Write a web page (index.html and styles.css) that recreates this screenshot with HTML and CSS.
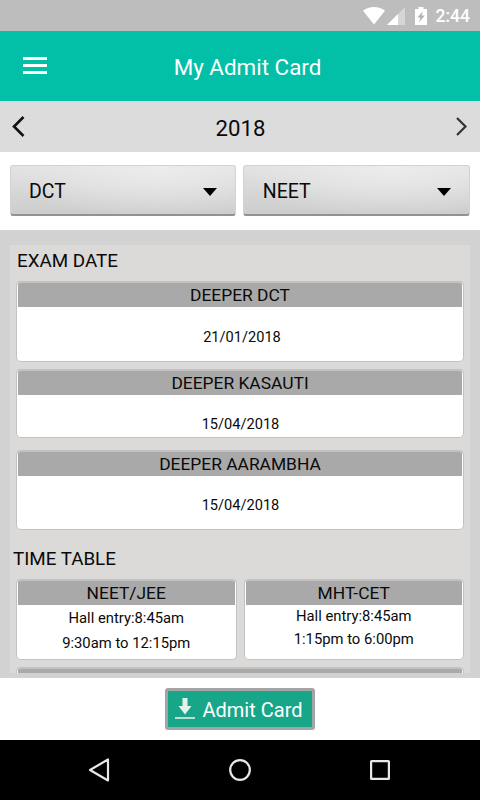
FILE: index.html
```html
<!DOCTYPE html>
<html lang="en">
<head>
  <meta charset="UTF-8" />
  <meta name="viewport" content="width=device-width, initial-scale=1" />
  <title>My Admit Card</title>
  <link rel="stylesheet" href="styles.css">
</head>
<body>

  <div class="status-bar">
    <svg class="wifi" width="22" height="18" viewBox="0 0 22 18"><path d="M0 3.8C6-1.2 16-1.2 22 3.8L11 17.5Z" fill="#fff"/></svg>
    <svg class="signal" width="18" height="18" viewBox="0 0 18 18"><path d="M0 18L18 0V18Z" fill="#d6d6d6"/><path d="M0 18L11 7V18Z" fill="#fff"/></svg>
    <svg class="battery" width="12" height="18" viewBox="0 0 12 18"><path d="M3.5 0h5v2H12v16H0V2h3.5Z" fill="#fff"/><path d="M8 4L2.500 10.500H5.500L4 15.500L9.700 8.500H6.500Z" fill="#b0b0b0"/></svg>
    <span class="clock">2:44</span>
  </div>

  <header class="toolbar">
    <button class="menu" aria-label="Menu">
      <svg width="24" height="17" viewBox="0 0 24 17"><path d="M0 0h24v3H0zM0 7h24v3H0zM0 14h24v3H0z" fill="#fff"/></svg>
    </button>
    <h1>My Admit Card</h1>
  </header>

  <div class="year-bar">
    <button class="prev" aria-label="Previous year">
      <svg width="13" height="21" viewBox="0 0 13 21"><path d="M11.500 1L2 10.500L11.500 20" fill="none" stroke="#111" stroke-width="2.600"/></svg>
    </button>
    <span class="year">2018</span>
    <button class="next" aria-label="Next year">
      <svg width="12" height="19" viewBox="0 0 12 19"><path d="M1 1L9.500 9.500L1 18" fill="none" stroke="#333" stroke-width="2.200"/></svg>
    </button>
  </div>

  <div class="filters">
    <button class="select">DCT <i class="caret"></i></button>
    <button class="select">NEET <i class="caret"></i></button>
  </div>

  <main class="content">
    <div class="panel">
      <h2 class="exam-title">Exam Date</h2>
      <div class="card dct">
        <h3>DEEPER DCT</h3>
        <p>21/01/2018</p>
      </div>
      <div class="card kasauti">
        <h3>DEEPER KASAUTI</h3>
        <p>15/04/2018</p>
      </div>
      <div class="card aarambha">
        <h3>DEEPER AARAMBHA</h3>
        <p>15/04/2018</p>
      </div>

      <h2 class="time-title">Time Table</h2>
      <div class="row">
        <div class="card neet">
          <h3>NEET/JEE</h3>
          <p>Hall entry:8:45am</p>
          <p>9:30am to 12:15pm</p>
        </div>
        <div class="card cet">
          <h3>MHT-CET</h3>
          <p>Hall entry:8:45am</p>
          <p>1:15pm to 6:00pm</p>
        </div>
      </div>
      <div class="card more">
        <h3></h3>
      </div>
    </div>
  </main>

  <footer class="actions">
    <button class="download">
      <svg width="22" height="22" viewBox="0 0 22 22"><path d="M8.500 0h5v8H17.500L11 16.500L4.500 8h4Z" fill="#e4f3ef"/><path d="M1 19h20v2H1z" fill="#b9e0d7"/></svg>
      <span>Admit Card</span>
    </button>
  </footer>

  <nav class="nav-bar">
    <svg width="22" height="24" viewBox="0 0 22 24"><path d="M20 1.500V22.500L2 12Z" fill="none" stroke="#e8e8e8" stroke-width="2.200" stroke-linejoin="round"/></svg>
    <svg width="22" height="22" viewBox="0 0 22 22"><circle cx="11" cy="11" r="9.800" fill="none" stroke="#e8e8e8" stroke-width="2.200"/></svg>
    <svg width="20" height="20" viewBox="0 0 20 20"><rect x="1.100" y="1.100" width="17.800" height="17.800" rx="0.500" fill="none" stroke="#e8e8e8" stroke-width="2.200"/></svg>
  </nav>

</body>
</html>
```
FILE: styles.css
```css
* {
  box-sizing: border-box;
}
body {
  margin: 0;
  width: 480px;
  height: 800px;
  display: flex;
  flex-direction: column;
  overflow: hidden;
  background: #fff;
  color: #0a0a0a;
  font-family: Roboto, "Liberation Sans", sans-serif;
}
h1, h2, h3, p {
  margin: 0;
  font-weight: 400;
}
button {
  border: none;
  background: none;
  padding: 0;
  color: inherit;
  font-family: inherit;
}
svg {
  display: block;
}

/* status bar */
.status-bar {
  height: 31px;
  background: #bdbdbd;
  display: flex;
  justify-content: flex-end;
  align-items: center;
  padding-right: 10px;
}
.signal {
  margin-left: 2px;
}
.battery {
  margin: 0 9px 0 10px;
}
.clock {
  color: #fff;
  font-size: 17.5px;
  font-weight: 500;
  line-height: 31px;
  padding-top: 1px;
}

/* toolbar */
.toolbar {
  height: 70px;
  background: #02c0a7;
  display: grid;
  grid-template-columns: 70px 1fr 55px;
  align-items: center;
}
.menu {
  justify-self: start;
  padding: 0 0 1px 23px;
}
.toolbar h1 {
  color: #fff;
  font-size: 22.4px;
  line-height: 30px;
  text-align: center;
  padding-top: 2px;
}
.year-bar {
  height: 51px;
  background: #dcdcdc;
  display: flex;
  justify-content: space-between;
  align-items: center;
  padding: 0 12px;
}
.year {
  font-size: 22.2px;
  padding-top: 2px;
}

/* dropdowns */
.filters {
  height: 78px;
  display: flex;
  gap: 7px;
  padding: 13px 10px 13px 9.5px;
}
.select {
  flex: 1;
  height: 51px;
  display: flex;
  justify-content: space-between;
  align-items: center;
  padding: 2px 19px 0 18.5px;
  font-size: 19.5px;
  border: 1px solid #d2d2d2;
  border-bottom: 2px solid #929292;
  border-radius: 3px;
  background: radial-gradient(ellipse at 65% 0, #ececec, rgba(226, 226, 226, 0) 75%), linear-gradient(#e2e2e2, #cdcdcd);
}
.caret {
  border: 7.5px solid transparent;
  border-top: 8px solid #000;
  border-bottom: 0;
  margin-top: 1px;
  margin-right: -1px;
}

/* scrolling content */
.content {
  height: 448px;
  background: #d2d2d2;
  padding: 15px 10px 5px;
}
.panel {
  height: 428px;
  background: #dbdad8;
  padding: 0 6px;
  overflow: hidden;
}
.panel h2 {
  font-size: 18.8px;
  text-transform: uppercase;
}
.exam-title {
  height: 36px;
  padding-left: 1px;
  line-height: 32px;
}
.time-title {
  height: 49px;
  margin-left: -3px;
  line-height: 58px;
}
.card {
  background: #fff;
  border: 1px solid #c2c2c2;
  border-top-width: 2px;
  border-radius: 5px;
  text-align: center;
  overflow: hidden;
}
.card h3 {
  height: 24px;
  margin: 0 1px;
  background: #a9a9a9;
  font-size: 17.4px;
  line-height: 25px;
}
.card p {
  font-size: 14.8px;
}
.dct {
  height: 81px;
  margin-bottom: 7px;
}
.dct p {
  line-height: 60px;
}
.kasauti {
  height: 69px;
  margin-bottom: 12px;
}
.kasauti p {
  line-height: 59px;
}
.aarambha {
  height: 80px;
}
.aarambha p {
  line-height: 58px;
}
.dct p,
.kasauti p,
.aarambha p {
  padding-left: 4px;
  font-size: 14.6px;
}
.kasauti p,
.aarambha p {
  padding-left: 1px;
}
.row {
  display: flex;
  gap: 7px;
}
.row .card {
  flex: 1;
  height: 81px;
}
.neet p {
  line-height: 25px;
}
.neet h3 + p {
  padding-top: 1px;
}
.cet p {
  line-height: 23px;
}
.more {
  height: 81px;
  margin-top: 7px;
}

/* bottom */
.actions {
  height: 62px;
  display: flex;
  justify-content: center;
  align-items: center;
}
.download {
  width: 150px;
  height: 42px;
  display: flex;
  align-items: center;
  gap: 6.5px;
  padding-left: 6px;
  border: 3px solid #a3a5a4;
  border-radius: 3px;
  background: #18a689;
  color: #fff;
  font-size: 20px;
}
.download span {
  padding-top: 2px;
}
.nav-bar {
  height: 60px;
  background: #000;
  display: flex;
  justify-content: space-between;
  align-items: center;
  padding: 0 90px 0 88px;
}
```
